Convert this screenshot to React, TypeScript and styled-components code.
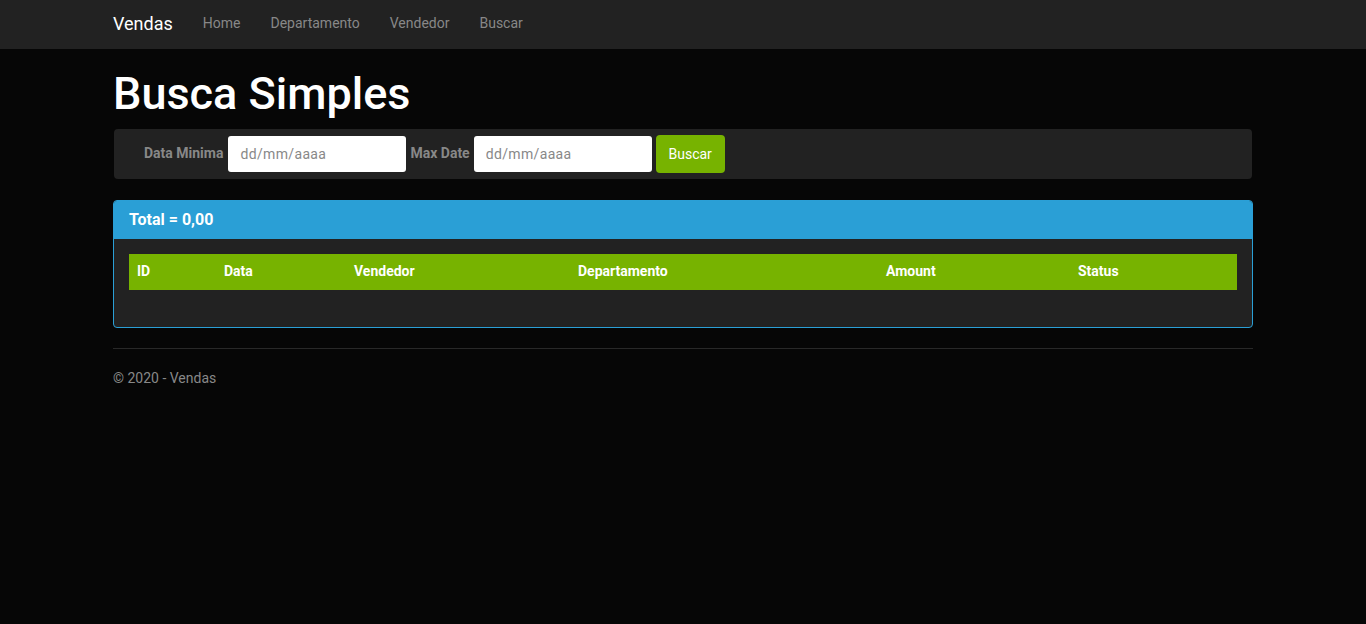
import React from "react";
import styled, { createGlobalStyle } from "styled-components";

const Global = createGlobalStyle`
  html, body { margin: 0; padding: 0; }
  body {
    background: #060606;
    color: #888;
    font-family: Roboto, "Helvetica Neue", Arial, sans-serif;
    font-size: 14px;
    line-height: 1.428571;
  }
  * { box-sizing: border-box; }
`;

const Navbar = styled.nav`
  height: 49px;
  background: #222;
`;

const Container = styled.div`
  width: 1170px;
  margin: 0 auto;
  padding: 0 15px;
`;

const NavInner = styled(Container)`
  display: flex;
  align-items: center;
  height: 100%;
  padding-bottom: 2px;
`;

const Brand = styled.a`
  color: #fff;
  font-size: 18px;
  text-decoration: none;
  margin-right: 15px;
`;

const NavLink = styled.a`
  color: #888;
  font-size: 14px;
  text-decoration: none;
  padding: 0 15px;
`;

const Title = styled.h1`
  color: #fff;
  font-size: 45px;
  font-weight: 500;
  line-height: 1.1;
  margin: 20px 0 10px;
`;

const SearchBar = styled.form`
  display: flex;
  align-items: center;
  gap: 4px;
  background: #222;
  border-radius: 4px;
  margin-left: 1px;
  margin-right: 1px;
  height: 50px;
  padding: 0 30px;
`;

const Label = styled.label`
  color: #888;
  font-weight: 700;
  font-size: 14px;
`;

const Input = styled.input`
  width: 178px;
  height: 36px;
  border: none;
  border-radius: 3px;
  background: #fff;
  padding: 0 12px;
  font-family: Roboto, Arial, sans-serif;
  font-size: 14px;
  letter-spacing: 0.35px;
  color: #555;
  &::placeholder { color: #888; }
`;

const FirstInput = styled(Input)`
  margin-left: 1px;
`;

const Button = styled.button`
  height: 38px;
  width: 69px;
  background: #77b300;
  color: #fff;
  border: none;
  border-radius: 4px;
  font-family: Roboto, Arial, sans-serif;
  font-size: 14px;
`;

const Panel = styled.div`
  margin-top: 21px;
  border: 1px solid #2a9fd6;
  border-radius: 4px;
  background: #222;
  overflow: hidden;
`;

const PanelHeading = styled.div`
  background: #2a9fd6;
  color: #fff;
  font-size: 16px;
  font-weight: 700;
  height: 38px;
  line-height: 38px;
  padding: 0 15px;
`;

const PanelBody = styled.div`
  padding: 15px 15px 15px;
`;

const Table = styled.table`
  width: 100%;
  border-collapse: collapse;
  margin-bottom: 22px;
`;

const Th = styled.th<{ $w: number }>`
  width: ${(p) => p.$w}px;
  background: #77b300;
  color: #fff;
  text-align: left;
  font-weight: 700;
  font-size: 14px;
  height: 36px;
  padding: 0 8px;
`;

const Rule = styled.hr`
  border: 0;
  border-top: 1px solid #282828;
  margin: 20px 0 19px;
`;

const Footer = styled.p`
  margin: 0;
  color: #888;
  font-size: 14px;
  line-height: 20px;
`;

const cols: [string, number][] = [
  ["ID", 87],
  ["Data", 130],
  ["Vendedor", 224],
  ["Departamento", 308],
  ["Amount", 192],
  ["Status", 167],
];

export default function App() {
  return (
    <>
      <Global />
      <Navbar>
        <NavInner>
          <Brand href="#">Vendas</Brand>
          <NavLink href="#">Home</NavLink>
          <NavLink href="#">Departamento</NavLink>
          <NavLink href="#">Vendedor</NavLink>
          <NavLink href="#">Buscar</NavLink>
        </NavInner>
      </Navbar>
      <Container>
        <Title>Busca Simples</Title>
        <SearchBar onSubmit={(e) => e.preventDefault()}>
          <Label>Data Minima</Label>
          <FirstInput placeholder="dd/mm/aaaa" />
          <Label>Max Date</Label>
          <Input placeholder="dd/mm/aaaa" />
          <Button type="submit">Buscar</Button>
        </SearchBar>
        <Panel>
          <PanelHeading>Total = 0,00</PanelHeading>
          <PanelBody>
            <Table>
              <thead>
                <tr>
                  {cols.map(([c, w]) => (
                    <Th key={c} $w={w}>
                      {c}
                    </Th>
                  ))}
                </tr>
              </thead>
              <tbody />
            </Table>
          </PanelBody>
        </Panel>
        <Rule />
        <Footer>© 2020 - Vendas</Footer>
      </Container>
    </>
  );
}
